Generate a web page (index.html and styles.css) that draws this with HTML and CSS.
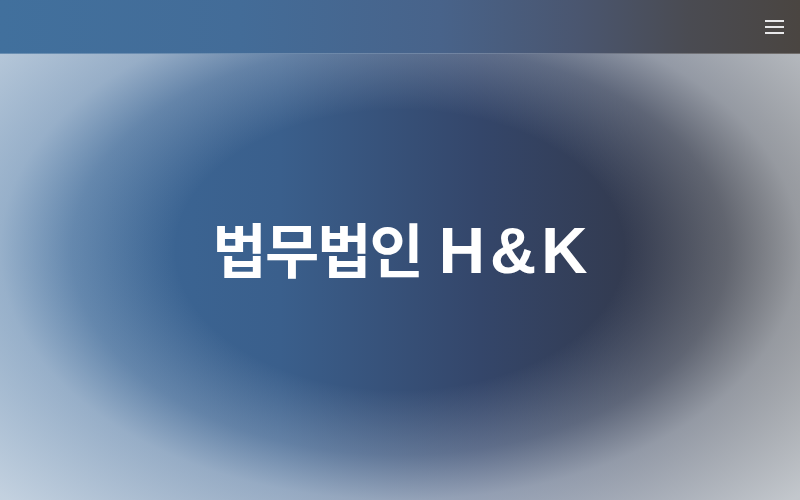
FILE: index.html
```html
<!DOCTYPE html>
<html lang="ko">
<head>
<meta charset="utf-8">
<title>법무법인 H&amp;K</title>
<link rel="stylesheet" href="styles.css">
</head>
<body>
<header class="site-header">
  <button class="menu-btn" aria-label="메뉴">
    <span class="bar"></span>
    <span class="bar"></span>
    <span class="bar"></span>
  </button>
</header>
<main class="hero">
  <h1 class="hero-title"><span class="ko">법무법인</span><span class="en">H&amp;K</span></h1>
</main>
</body>
</html>
```
FILE: styles.css
```css
* { box-sizing: border-box; }
html, body { margin: 0; padding: 0; height: 100%; }
body {
  font-family: "Noto Sans CJK KR", "Noto Sans", sans-serif;
  background: #3a5a80;
}
.site-header {
  position: absolute;
  top: 0; left: 0; right: 0;
  height: 54px;
  display: flex;
  justify-content: flex-end;
  align-items: center;
  padding-right: 16px;
  background: linear-gradient(90deg, #41709d 0%, #436c98 30%, #48638a 55%, #4a5670 72%, #4a4b52 86%, #4a4541 100%);
  border-bottom: 1px solid rgba(255,255,255,0.22);
  z-index: 2;
}
.menu-btn {
  background: none;
  border: 0;
  padding: 0;
  width: 19px;
  display: flex;
  flex-direction: column;
  gap: 4px;
  cursor: pointer;
}
.bar {
  display: block;
  height: 2px;
  width: 19px;
  background: #e8e8ea;
}
.hero {
  height: 500px;
  display: flex;
  align-items: center;
  justify-content: center;
  background:
    radial-gradient(ellipse 400px 250px at 50% 50%, rgba(225,232,240,0) 0%, rgba(225,232,240,0) 56%, rgba(222,230,240,0.25) 82%, rgba(225,232,240,0.55) 100%, rgba(228,234,240,0.8) 140%),
    linear-gradient(90deg, #3d6c9c 0%, #3a5f8c 35%, #34466a 60%, #333a4e 80%, #3c3a3c 100%);
}
.hero-title {
  margin: 0;
  color: #fff;
  font-size: 59px;
  font-weight: 700;
  line-height: 1;
  display: flex;
  align-items: baseline;
  gap: 15px;
}
.ko { letter-spacing: -2px; margin-right: 2px; }
.en {
  font-family: "Liberation Sans", "Noto Sans CJK KR", sans-serif;
  font-size: 64px;
  letter-spacing: 5px;
  margin-right: -5px;
}
```
